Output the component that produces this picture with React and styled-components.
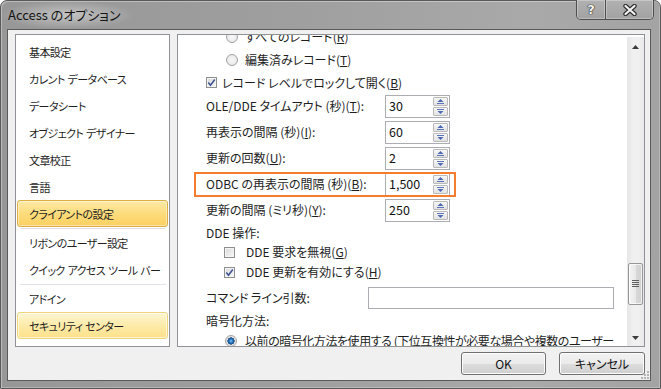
import React from 'react';
import styled, { createGlobalStyle, css } from 'styled-components';

const GlobalStyle = createGlobalStyle`
  html, body {
    margin: 0;
    padding: 0;
    background: #fff;
  }
  body {
    font-family: "Noto Sans CJK JP", "Noto Sans", sans-serif;
    font-size: 12px;
    font-feature-settings: "palt";
    color: #1e1e1e;
  }
`;

const navItems = [
  { label: '基本設定' },
  { label: 'カレント データベース' },
  { label: 'データシート' },
  { label: 'オブジェクト デザイナー' },
  { label: '文章校正' },
  { label: '言語' },
  { label: 'クライアントの設定', state: 'active' },
  { separator: true },
  { label: 'リボンのユーザー設定' },
  { label: 'クイック アクセス ツール バー' },
  { separator: true },
  { label: 'アドイン' },
  { label: 'セキュリティ センター', state: 'hot' },
];

const spinFields = [
  { label: 'OLE/DDE タイムアウト (秒)(', key: 'T', value: '30' },
  { label: '再表示の間隔 (秒)(', key: 'I', value: '60' },
  { label: '更新の回数(', key: 'U', value: '2' },
  { label: 'ODBC の再表示の間隔 (秒)(', key: 'B', value: '1,500', marked: true },
  { label: '更新の間隔 (ミリ秒)(', key: 'Y', value: '250' },
];

const Window = styled.div`
  box-sizing: border-box;
  width: 661px;
  height: 389px;
  display: flex;
  flex-direction: column;
  padding: 0 9px 7px 6px;
  border: 1px solid #595959;
  border-radius: 7px 7px 0 0;
  background: linear-gradient(90deg, #979797 0%, #9f9f9f 45%, #a9a9a9 80%, #a3a3a3 100%);
  box-shadow: inset 1px 1px 0 rgba(255, 255, 255, 0.35), inset -1px -1px 0 rgba(255, 255, 255, 0.25);
`;

const TitleBar = styled.div`
  height: 28px;
  margin: 0 -9px 0 -6px;
  padding: 0 6px 0 7px;
  display: flex;
  align-items: flex-start;
  justify-content: space-between;
`;

const Title = styled.div`
  line-height: 28px;
  font-size: 13px;
  color: #141414;
  margin-left: -8px;
  padding: 0 14px 0 8px;
  background: radial-gradient(closest-side, rgba(255, 255, 255, 0.42), rgba(255, 255, 255, 0));
`;

const Caption = styled.div`
  display: flex;
  height: 20px;
  margin-top: -1px;
  box-sizing: border-box;
  border: 1px solid #4f4f4f;
  border-top: 0;
  border-radius: 0 0 5px 5px;
  overflow: hidden;
`;

const CaptionButton = styled.div`
  width: ${({ $w }) => $w}px;
  display: flex;
  align-items: center;
  justify-content: center;
  background: linear-gradient(#b1b1b1, #a2a2a2);
  box-shadow: inset 0 0 0 1px rgba(255, 255, 255, 0.28);
  color: #f4f4f4;
  font-family: "DejaVu Sans", sans-serif;
  font-weight: bold;
  font-size: 13px;
  text-shadow: 0 0 1px #222, 0 0 1px #222, 0 0 1px #222;

  & + & {
    border-left: 1px solid #4f4f4f;
  }
`;

const Client = styled.div`
  position: relative;
  flex: 1;
  display: flex;
  flex-direction: column;
  padding: 4px 5px 0 7px;
  border: 1px solid #5a5a5a;
  background: #f0f0f0;
`;

const Panels = styled.div`
  display: flex;
  gap: 7px;
  height: 313px;
`;

const Nav = styled.div`
  width: 155px;
  box-sizing: border-box;
  border: 1px solid #8f9398;
  background: #fff;
  padding-top: 3px;
`;

const NavItem = styled.div`
  height: 27px;
  box-sizing: border-box;
  margin: 0 1px;
  padding-left: 11px;
  display: flex;
  align-items: center;
  font-size: 11px;
  letter-spacing: -0.6px;
  word-spacing: 1px;
  line-height: 16px;
  white-space: nowrap;
  border: 1px solid transparent;
  border-radius: 3px;

  ${({ $state }) =>
    $state === 'active' &&
    css`
      border-color: #dcae43;
      background: linear-gradient(#fde9a6 0%, #fddc7c 50%, #fcd062 100%);
      box-shadow: inset 0 0 0 1px rgba(255, 255, 255, 0.45);
    `}

  ${({ $state }) =>
    $state === 'hot' &&
    css`
      border-color: #f0d47c;
      background: linear-gradient(#fff6d2 0%, #feeba9 50%, #fde08a 100%);
      box-shadow: inset 0 0 0 1px rgba(255, 255, 255, 0.6);
    `}
`;

const NavSeparator = styled.div`
  height: 1px;
  margin: 1px 3px 0 4px;
  background: #e0e1e8;
`;

const ContentPanel = styled.div`
  flex: 1;
  display: flex;
  box-sizing: border-box;
  border: 1px solid #8f9398;
  background: #fff;
`;

const ScrollArea = styled.div`
  flex: 1;
  overflow: hidden;
`;

const Scrolled = styled.div`
  margin-top: -9px;
`;

const Row = styled.div`
  display: flex;
  align-items: ${({ $top }) => ($top ? 'flex-start' : 'center')};
  height: ${({ $h }) => $h}px;
  padding-left: ${({ $indent }) => $indent}px;
  gap: ${({ $gap }) => $gap}px;
  margin-top: ${({ $mt }) => $mt || 0}px;
  line-height: 16px;
  white-space: nowrap;
`;

const WrapText = styled.span`
  white-space: normal;
  width: 372px;
  line-height: 19px;
  letter-spacing: -0.45px;
`;

const Radio = styled.span`
  flex: none;
  width: 12px;
  height: 12px;
  box-sizing: border-box;
  border-radius: 50%;
  border: 1px solid #a3a3a3;
  margin-top: ${({ $mt }) => $mt || 0}px;
  background: ${({ $checked }) =>
    $checked
      ? 'radial-gradient(circle, #7cc6f5 0, #2270bb 2px, #17477c 3.4px, #dedede 3.8px, #f6f6f6 100%)'
      : 'radial-gradient(circle, #f8f8f8 0, #ececec 60%, #dcdcdc 100%)'};
`;

const CheckBox = styled.span`
  flex: none;
  width: 11px;
  height: 11px;
  box-sizing: border-box;
  border: 1px solid #8e8f8f;
  background: linear-gradient(135deg, #d9d9d9, #f9f9f9);
  box-shadow: inset 0 0 0 1px #f4f4f4;
  display: flex;
  align-items: center;
  justify-content: center;
`;

const FieldRow = styled.div`
  position: relative;
  display: grid;
  grid-template-columns: ${({ $label }) => $label}px ${({ $field }) => $field}px;
  align-items: center;
  width: fit-content;
  height: ${({ $h }) => $h}px;
  margin: ${({ $mt }) => $mt || 0}px 0 0 28px;
  line-height: 16px;
  white-space: nowrap;

  ${({ $marked }) =>
    $marked &&
    css`
      &::after {
        content: '';
        position: absolute;
        left: -12px;
        right: -6px;
        top: 1px;
        bottom: 0;
        border: 2px solid #f47d2f;
      }
    `}
`;

const SpinBox = styled.div`
  height: 23px;
  box-sizing: border-box;
  border: 1px solid #abadb3;
  background: #fff;
  display: flex;
  align-items: center;
  justify-content: space-between;
  padding: 0 1px 0 3px;
  font-size: 12.5px;
  color: #111;
`;

const SpinButtons = styled.div`
  display: flex;
  flex-direction: column;
  gap: 1px;
`;

const SpinButton = styled.div`
  width: 15px;
  height: 9px;
  box-sizing: border-box;
  border: 1px solid #b9b9b9;
  border-radius: 1px;
  background: linear-gradient(#f8f8f8, #e2e2e2);
  display: flex;
  align-items: center;
  justify-content: center;
`;

const TextBox = styled.div`
  height: 22px;
  box-sizing: border-box;
  border: 1px solid #abadb3;
  background: #fff;
`;

const ScrollBar = styled.div`
  width: 17px;
  margin-top: 2px;
  display: flex;
  flex-direction: column;
  background: linear-gradient(90deg, #e6e6e6, #f0f0f0 35%, #f0f0f0 70%, #e9e9e9);
`;

const ScrollArrow = styled.div`
  height: ${({ $h }) => $h}px;
  display: flex;
  align-items: center;
  justify-content: center;
`;

const Track = styled.div`
  flex: 1;
`;

const Thumb = styled.div`
  height: 42px;
  margin: ${({ $offset }) => $offset}px 1px 0;
  box-sizing: border-box;
  border: 1px solid #979797;
  border-radius: 2px;
  background: linear-gradient(90deg, #f4f4f4, #e8e8e8 50%, #d9d9d9 51%, #d0d0d0);
  box-shadow: inset 0 0 0 1px rgba(255, 255, 255, 0.7);
  display: flex;
  align-items: center;
  justify-content: center;
`;

const Footer = styled.div`
  display: flex;
  justify-content: flex-end;
  gap: 13px;
  margin-top: 5px;
`;

const Button = styled.div`
  width: ${({ $w }) => $w}px;
  height: 23px;
  box-sizing: border-box;
  border: 1px solid #707070;
  border-radius: 3px;
  background: linear-gradient(#f2f2f2 0%, #ebebeb 50%, #dddddd 51%, #cfcfcf 100%);
  box-shadow: inset 0 0 0 1px #fcfcfc;
  display: flex;
  align-items: center;
  justify-content: center;
  line-height: 16px;
  color: #111;
`;

const Grip = styled.svg`
  position: absolute;
  right: 1px;
  bottom: 1px;
`;

const Check = () => (
  <svg width="9" height="9" viewBox="0 0 9 9">
    <path d="M1.3 4.6 L3.5 7.2 L7.8 1.4" fill="none" stroke="#3f5590" strokeWidth="1.6" />
  </svg>
);

const SpinArrow = ({ down }) => (
  <svg width="7" height="5" viewBox="0 0 7 5">
    {down ? (
      <>
        <rect x="0" y="0" width="7" height="1" fill="#5a74b8" />
        <path d="M0.5 2 H6.5 L3.5 5 Z" fill="#4d68b0" />
      </>
    ) : (
      <>
        <path d="M3.5 0 L6.5 3 H0.5 Z" fill="#4d68b0" />
        <rect x="0" y="4" width="7" height="1" fill="#5a74b8" />
      </>
    )}
  </svg>
);

const Spin = ({ value }) => (
  <SpinBox>
    <span>{value}</span>
    <SpinButtons>
      <SpinButton>
        <SpinArrow />
      </SpinButton>
      <SpinButton>
        <SpinArrow down />
      </SpinButton>
    </SpinButtons>
  </SpinBox>
);

const CloseGlyph = () => (
  <svg width="14" height="12" viewBox="0 0 14 12">
    <path d="M2.5 2 L11.5 10 M11.5 2 L2.5 10" stroke="#2e2e2e" strokeWidth="4.4" strokeLinecap="round" />
    <path d="M2.5 2 L11.5 10 M11.5 2 L2.5 10" stroke="#f2f2f2" strokeWidth="2.2" strokeLinecap="round" />
  </svg>
);

const App = () => (
  <>
    <GlobalStyle />
    <Window>
      <TitleBar>
        <Title>Access のオプション</Title>
        <Caption>
          <CaptionButton $w={28}>?</CaptionButton>
          <CaptionButton $w={47}>
            <CloseGlyph />
          </CaptionButton>
        </Caption>
      </TitleBar>

      <Client>
        <Panels>
          <Nav>
            {navItems.map((item, i) =>
              item.separator ? (
                <NavSeparator key={i} />
              ) : (
                <NavItem key={i} $state={item.state}>
                  {item.label}
                </NavItem>
              )
            )}
          </Nav>

          <ContentPanel>
            <ScrollArea>
              <Scrolled>
                <Row $h={22} $indent={48} $gap={7}>
                  <Radio />
                  <span>
                    すべてのレコード(<u>R</u>)
                  </span>
                </Row>
                <Row $h={24} $indent={48} $gap={7}>
                  <Radio />
                  <span>
                    編集済みレコード(<u>T</u>)
                  </span>
                </Row>
                <Row $h={21} $indent={28} $gap={5}>
                  <CheckBox>
                    <Check />
                  </CheckBox>
                  <span>
                    レコード レベルでロックして開く(<u>B</u>)
                  </span>
                </Row>

                {spinFields.map((f) => (
                  <FieldRow key={f.label} $h={26} $label={179} $field={65} $marked={f.marked}>
                    <span>
                      {f.label}
                      <u>{f.key}</u>):
                    </span>
                    <Spin value={f.value} />
                  </FieldRow>
                ))}

                <Row $h={19} $indent={28}>
                  DDE 操作:
                </Row>
                <Row $h={20} $indent={46} $gap={11}>
                  <CheckBox />
                  <span>
                    DDE 要求を無視(<u>G</u>)
                  </span>
                </Row>
                <Row $h={20} $indent={46} $gap={11}>
                  <CheckBox>
                    <Check />
                  </CheckBox>
                  <span>
                    DDE 更新を有効にする(<u>H</u>)
                  </span>
                </Row>
                <FieldRow $h={24} $mt={4} $label={162} $field={246}>
                  <span>コマンド ライン引数:</span>
                  <TextBox />
                </FieldRow>
                <Row $h={21} $indent={28}>
                  暗号化方法:
                </Row>
                <Row $top $h={40} $indent={47} $gap={8}>
                  <Radio $checked $mt={4} />
                  <WrapText>
                    以前の暗号化方法を使用する (下位互換性が必要な場合や複数のユーザー データベースを使用する場合に適しています)(<u>U</u>)
                  </WrapText>
                </Row>
              </Scrolled>
            </ScrollArea>

            <ScrollBar>
              <ScrollArrow $h={19}>
                <svg width="7" height="4" viewBox="0 0 7 4">
                  <path d="M3.5 0 L7 4 H0 Z" fill="#3c3c3c" />
                </svg>
              </ScrollArrow>
              <Track>
                <Thumb $offset={207}>
                  <svg width="7" height="8" viewBox="0 0 7 8">
                    <path d="M0 0.5 H7 M0 2.5 H7 M0 4.5 H7 M0 6.5 H7" stroke="#5e5e5e" strokeWidth="1" />
                  </svg>
                </Thumb>
              </Track>
              <ScrollArrow $h={17}>
                <svg width="7" height="4" viewBox="0 0 7 4">
                  <path d="M0 0 H7 L3.5 4 Z" fill="#3c3c3c" />
                </svg>
              </ScrollArrow>
            </ScrollBar>
          </ContentPanel>
        </Panels>

        <Footer>
          <Button $w={85}>OK</Button>
          <Button $w={86}>キャンセル</Button>
        </Footer>

        <Grip width="8" height="8" viewBox="0 0 8 8">
          <g fill="#b4b4b4">
            <rect x="6" y="0" width="2" height="2" />
            <rect x="3" y="3" width="2" height="2" />
            <rect x="6" y="3" width="2" height="2" />
            <rect x="0" y="6" width="2" height="2" />
            <rect x="3" y="6" width="2" height="2" />
            <rect x="6" y="6" width="2" height="2" />
          </g>
        </Grip>
      </Client>
    </Window>
  </>
);

export default App;
